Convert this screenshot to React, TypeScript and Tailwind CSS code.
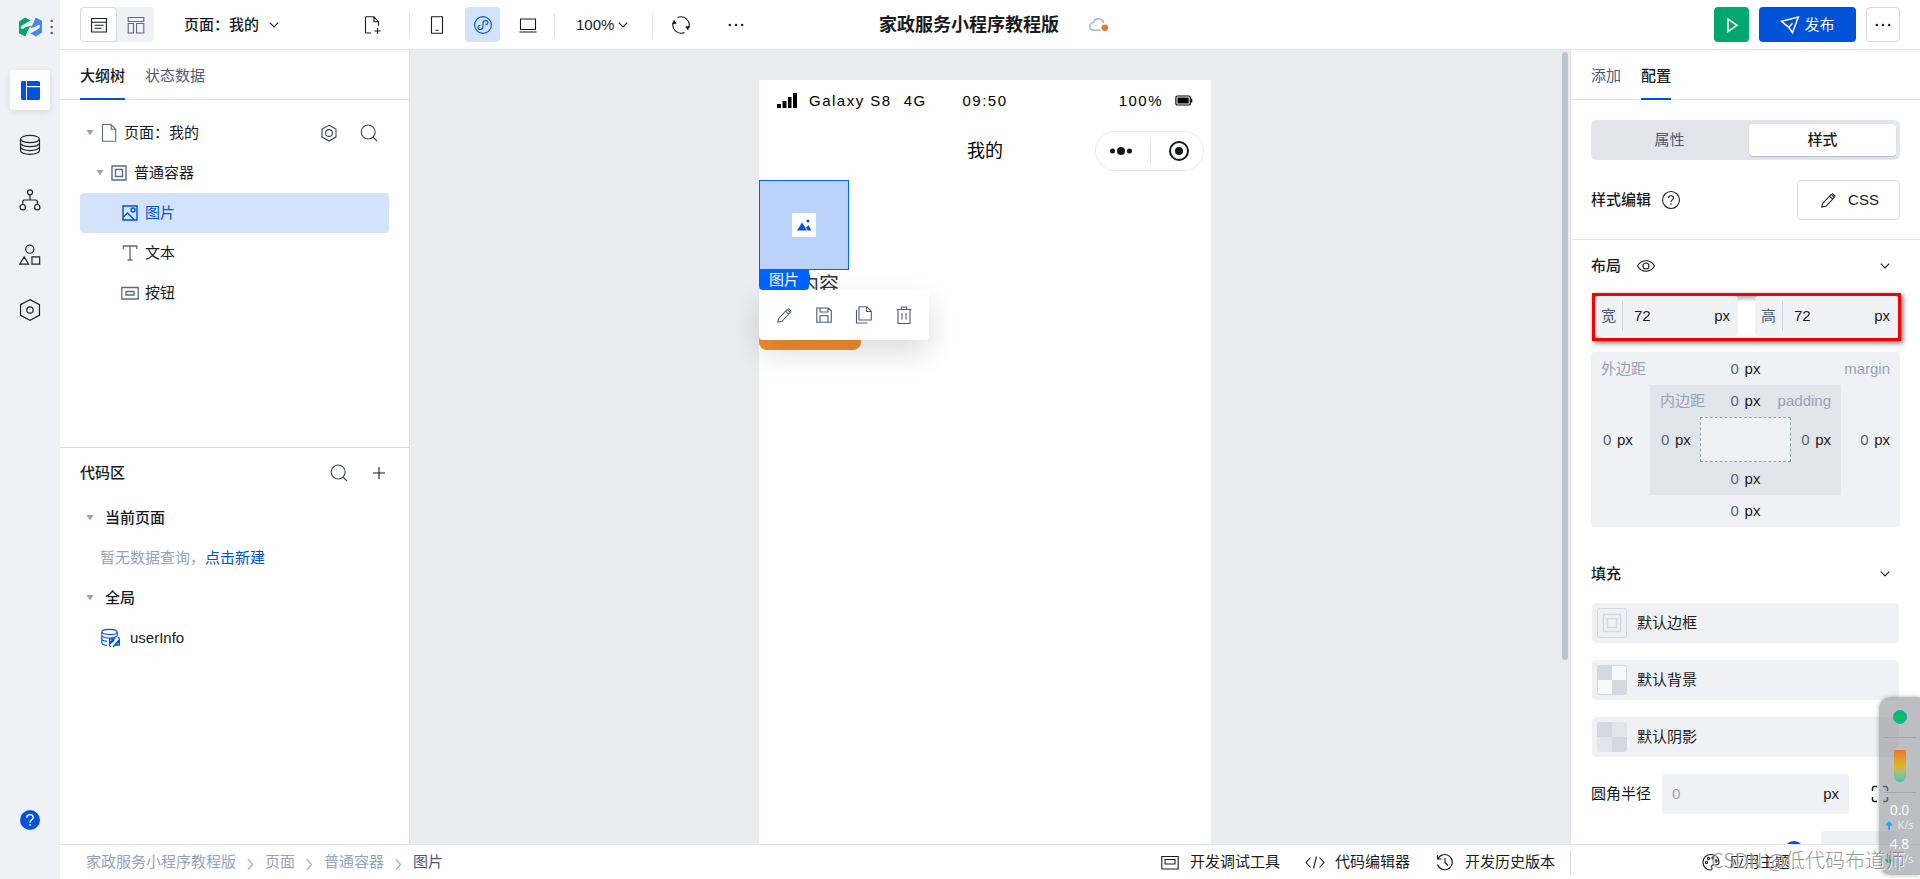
import React from "react";

type IconProps = { className?: string; children: React.ReactNode; size?: number };

function Icon({ className = "", children, size = 20 }: IconProps) {
  return (
    <svg
      width={size}
      height={size}
      viewBox="0 0 20 20"
      fill="none"
      stroke="currentColor"
      strokeWidth="1.1"
      className={"shrink-0 " + className}
      aria-hidden="true"
    >
      {children}
    </svg>
  );
}

const Chevron = () => (
  <Icon size={12}>
    <path d="M3 6l7 7 7-7" strokeWidth="2" />
  </Icon>
);

const Search = () => (
  <Icon className="text-[#3c4558]">
    <circle cx="9.2" cy="9" r="7" />
    <path d="M14 14l4 4" />
  </Icon>
);

const Pencil = () => (
  <Icon>
    <g transform="translate(2.5 2.500) scale(.82)" strokeWidth="1.3">
      <path d="M2.500 13.500L13 2.300l4 3.500L6.600 16.800l-5 .9zM11 4.500l3.900 3.500M14.200 1l4 3.600" />
    </g>
  </Icon>
);

const Hexagon = () => (
  <Icon className="text-[#3c4558]">
    <path d="M10 2.300l7 3.800v8L10 18l-7-3.900v-8z" />
    <circle cx="10" cy="10" r="3.400" />
  </Icon>
);

const Arrow = () => (
  <svg width="8" height="6" viewBox="0 0 8 6" className="shrink-0" aria-hidden="true">
    <path d="M.5 0h7L4 5.600z" fill="#97a3b7" />
  </svg>
);

const Crumb = () => (
  <Icon size={13} className="mt-1 text-[#a9b4c6]">
    <path d="M6 2l7 8-7 8" strokeWidth="2" />
  </Icon>
);

const Dots = () => (
  <svg width="16" height="4" viewBox="0 0 16 4" fill="currentColor" aria-hidden="true">
    <circle cx="1.800" cy="2" r="1.200" />
    <circle cx="8" cy="2" r="1.200" />
    <circle cx="14.200" cy="2" r="1.200" />
  </svg>
);

const Divider = () => <span className="h-6 w-px bg-[#e2e5ea]" />;

function Rail() {
  const item = "flex h-10 w-10 items-center justify-center rounded";
  return (
    <nav className="flex w-[60px] shrink-0 flex-col items-center bg-[#f0f1f5] pb-[49px] text-[#20242c]">
      <div className="flex h-[54px] w-full items-center gap-2 pl-[19px]">
        <svg width="23" height="20" viewBox="0 0 23 20" className="shrink-0" aria-hidden="true">
          <path d="M0 4.500L6 .4l5.500 3.200L4.500 7.600C1.500 9.400 1.200 11.300 2.500 11.800c1.200.4 2.400-.4 4-1.500L12 8.800 9.500 12.300 6.300 19.600 0 16.300z" fill="#00a870" />
          <path d="M23 15.500l-6 4.100-5.500-3.200 7-4c3-1.800 3.300-3.700 2-4.200-1.200-.4-2.400.4-4 1.500L11 11.200l2.500-3.500L16.700.4 23 3.700z" fill="#4787f0" />
        </svg>
        <svg width="4" height="16" viewBox="0 0 4 16" fill="#5b6475" aria-hidden="true">
          <circle cx="1.700" cy="2" r="1.300" />
          <circle cx="1.700" cy="8" r="1.300" />
          <circle cx="1.700" cy="14" r="1.300" />
        </svg>
      </div>
      <div className="flex flex-col gap-[15px] pt-4">
        <button aria-label="页面" className={item + " bg-white shadow-[0_2px_6px_rgba(54,58,80,0.12)]"}>
          <svg width="19" height="19" viewBox="0 0 19 19" fill="#0052d9" aria-hidden="true">
            <path d="M1.500 0H5v19H1.500A1.500 1.500 0 0 1 0 17.500v-16A1.500 1.500 0 0 1 1.500 0zM6 0h11.500A1.500 1.500 0 0 1 19 1.500V5H6zM6 6.200h13v11.300a1.500 1.500 0 0 1-1.500 1.500H6z" />
          </svg>
        </button>
        <button aria-label="数据" className={item}>
          <Icon size={22}>
            <ellipse cx="10" cy="4.600" rx="8.600" ry="3.300" />
            <path d="M1.400 4.600v10.600c0 1.800 3.800 3.300 8.600 3.300s8.600-1.500 8.600-3.300V4.600M1.400 8.200c0 1.800 3.800 3.300 8.600 3.300s8.600-1.500 8.600-3.300M1.400 11.800c0 1.800 3.800 3.300 8.600 3.300s8.600-1.500 8.600-3.300" />
          </Icon>
        </button>
        <button aria-label="流程" className={item}>
          <Icon size={22}>
            <circle cx="10" cy="3" r="2.300" />
            <circle cx="3.400" cy="16.500" r="2.400" />
            <circle cx="16.600" cy="16.500" r="2.400" />
            <path d="M10 5.300V10M3.400 14v-2.500A1.500 1.500 0 0 1 5 10h10a1.500 1.500 0 0 1 1.600 1.500V14" />
          </Icon>
        </button>
        <button aria-label="组件" className={item}>
          <Icon size={22}>
            <circle cx="9.800" cy="4.700" r="3.700" />
            <path d="M4.700 11.700l4 6.500H.8zM11.800 11.700h7v6.500h-7z" />
          </Icon>
        </button>
        <button aria-label="设置" className={item}>
          <Icon size={22}>
            <path d="M10 .6l8.600 4.500v9.800L10 19.400l-8.600-4.500V5.100z" />
            <circle cx="10" cy="10" r="2.900" />
          </Icon>
        </button>
      </div>
      <button aria-label="帮助" className="mt-auto text-[#0052d9]">
        <svg width="20" height="20" viewBox="0 0 20 20" aria-hidden="true">
          <circle cx="10" cy="10" r="10" fill="#0052d9" />
          <path d="M6.800 7.700c0-1.900 1.300-3 3.200-3s3.200 1.100 3.200 2.700c0 1.300-.8 1.900-1.600 2.500-1 .7-1.600 1.300-1.600 2.800" fill="none" stroke="#fff" strokeWidth="1.300" />
          <circle cx="10" cy="15" r=".9" fill="#fff" />
        </svg>
      </button>
    </nav>
  );
}

function Header() {
  return (
    <header className="grid h-[50px] shrink-0 grid-cols-[1fr_auto_1fr] items-center border-b border-[#e2e5ea] px-5 text-[#181b22]">
      <div className="flex items-center">
        <div className="flex h-[35px] rounded bg-[#f0f1f5]">
          <button aria-label="列表" className="flex w-[37px] items-center justify-center rounded border border-[#d3d8e2] bg-white">
            <Icon>
              <path d="M2.600 3.500h14.800v13.500H2.600zM2.600 7.300h14.800M5.600 10.300h9M5.600 13.300h7" />
            </Icon>
          </button>
          <button aria-label="布局" className="flex w-[37px] items-center justify-center text-[#5b6b85]">
            <Icon>
              <path d="M2.200 2.500h15.600v4H2.200zM2.200 8.500h5.300v9.500H2.200zM10.500 8.500h7.300v9.500h-7.300z" />
            </Icon>
          </button>
        </div>
        <button className="ml-[30px] flex items-center gap-[9px] font-medium">
          页面：我的
          <Chevron />
        </button>
        <button aria-label="新建页面" className="mr-[26px] ml-[83px]">
          <Icon>
            <path d="M8 18H3.300a.8.8 0 0 1-.8-.8V2.500a.8.8 0 0 1 .8-.8H11l4.500 5v4M11 1.700v5h4.500M14.500 13v6M11.500 16h6" />
          </Icon>
        </button>
        <Divider />
        <button aria-label="手机" className="ml-[17px] flex w-5 justify-center">
          <Icon>
            <path d="M4.500 1.800h11v16.400h-11zM8.500 15.300h3" />
          </Icon>
        </button>
        <button aria-label="小程序" className="mr-[18px] ml-[18px] flex h-[35px] w-[35px] items-center justify-center rounded bg-[#d4e3fc] text-[#0052d9]">
          <Icon>
            <circle cx="10" cy="10" r="8.400" />
            <path d="M7.500 10.200c-1.600.2-2.500 1.100-2.500 2.200 0 1.200 1.100 2 2.400 2s2.600-.9 2.600-2.300V7.900c0-1.400 1.300-2.300 2.600-2.300s2.400.8 2.400 2c0 1.100-.9 2-2.500 2.200" />
          </Icon>
        </button>
        <button aria-label="电脑" className="mr-4">
          <Icon>
            <path d="M2.500 4h15v10.500h-15zM1.500 17h17" />
          </Icon>
        </button>
        <Divider />
        <button className="mr-[23px] ml-[21px] flex items-center gap-[3px]">
          100%
          <Chevron />
        </button>
        <Divider />
        <button aria-label="刷新" className="ml-[18px]">
          <Icon>
            <path d="M6.500 2.600A8.200 8.200 0 0 1 17.600 13M13.500 17.400A8.200 8.200 0 0 1 2.400 7" />
            <path d="M1.200 9.600L3 4.700l2.800 3.700zM18.800 10.800L17 15.500l-2.800-3.700z" fill="currentColor" stroke="none" />
          </Icon>
        </button>
        <button aria-label="更多" className="ml-[37px]">
          <Dots />
        </button>
      </div>
      <div className="flex items-center gap-[30px] pl-2">
        <h1 className="text-lg font-bold">家政服务小程序教程版</h1>
        <svg width="20" height="16" viewBox="0 0 20 16" fill="none" aria-label="未保存">
          <path d="M11.500 13.300H5a3.900 3.900 0 0 1-.5-7.800A5.200 5.200 0 0 1 14.600 6" stroke="#aab4c5" strokeWidth="1.500" />
          <circle cx="15.800" cy="10.800" r="3.300" fill="#ed7b2f" />
        </svg>
      </div>
      <div className="flex items-center justify-end gap-[10px]">
        <button aria-label="预览" className="flex h-[35px] w-[35px] items-center justify-center rounded bg-[#00a870] text-white">
          <Icon>
            <path d="M6 4l9 6.300-9 6.200z" strokeWidth="1.500" />
          </Icon>
        </button>
        <button className="flex h-[35px] w-[97px] items-center justify-center gap-1 rounded bg-[#0052d9] text-white">
          <Icon>
            <path d="M1.500 6.300L18.300 2l-5.800 15.700-3.700-5.400zM8.800 12.300l3.700-4" strokeWidth="1.500" />
          </Icon>
          发布
        </button>
        <button aria-label="更多操作" className="flex h-[35px] w-[34px] items-center justify-center rounded border border-[#d3d8e2]">
          <Dots />
        </button>
      </div>
    </header>
  );
}

function Tabs({ items, active }: { items: string[]; active: number }) {
  return (
    <div className="flex h-[50px] shrink-0 gap-5 border-b border-[#e2e5ea] px-5">
      {items.map((t, i) => (
        <button
          key={t}
          className={
            i === active
              ? "-mb-px border-b-2 border-[#0052d9] pt-[3px] font-medium text-[#181b22]"
              : "-mb-px border-b-2 border-transparent pt-[3px] text-[#4b5b76]"
          }
        >
          {t}
        </button>
      ))}
    </div>
  );
}

function LeftPanel() {
  const row = "flex h-10 items-center rounded";
  return (
    <aside className="flex w-[350px] shrink-0 flex-col border-r border-[#dcdfe6]">
      <Tabs items={["大纲树", "状态数据"]} active={0} />
      <div className="flex h-[347px] shrink-0 flex-col px-5 pt-[13px]">
        <div className={row + " gap-[5px] pr-[10px] pl-[6px]"}>
          <Arrow />
          <Icon className="text-[#5b6b85]">
            <path d="M3.500 1.500h8.700l4.500 4.700v12H3.500zM12.200 1.500v4.700h4.500" />
          </Icon>
          <span className="flex-1">页面：我的</span>
          <button aria-label="页面设置" className="mr-[15px]">
            <Hexagon />
          </button>
          <button aria-label="搜索">
            <Search />
          </button>
        </div>
        <div className={row + " gap-[5px] pl-4"}>
          <Arrow />
          <Icon className="text-[#5b6b85]">
            <path d="M3 3h14v14H3zM6.500 6.500h7v7h-7z" strokeWidth="1.400" />
          </Icon>
          普通容器
        </div>
        <div className={row + " gap-[5px] bg-[#d4e3fc] pl-10 text-[#0052d9]"}>
          <Icon>
            <path d="M3 3h14v14H3zM3.500 14l4-4 6.500 6.500" strokeWidth="1.400" />
            <circle cx="13" cy="7" r="2" strokeWidth="1.400" />
          </Icon>
          图片
        </div>
        <div className={row + " gap-[5px] pl-10"}>
          <Icon className="text-[#5b6b85]">
            <path d="M3.300 6V3h13.400v3M10 3v14M7.500 17h5" strokeWidth="1.300" />
          </Icon>
          文本
        </div>
        <div className={row + " gap-[5px] pl-10"}>
          <Icon className="text-[#5b6b85]">
            <path d="M1.800 4.500h16.400v11.500H1.800zM6 8.500h8v3.500H6z" strokeWidth="1.300" />
          </Icon>
          按钮
        </div>
      </div>
      <div className="flex flex-1 flex-col border-t border-[#d3d8e2] px-5">
        <div className="flex h-[50px] items-center justify-between">
          <h2 className="font-medium">代码区</h2>
          <div className="flex gap-5">
            <button aria-label="搜索代码">
              <Search />
            </button>
            <button aria-label="新增">
              <Icon>
                <path d="M10 4v12M4 10h12" />
              </Icon>
            </button>
          </div>
        </div>
        <div className={row + " gap-[11px] pl-[6px] font-medium"}>
          <Arrow />
          当前页面
        </div>
        <div className={row + " pl-5 text-[#97a3b7]"}>
          暂无数据查询，
          <a href="#new" className="text-[#0052d9]">
            点击新建
          </a>
        </div>
        <div className={row + " gap-[11px] pl-[6px] font-medium"}>
          <Arrow />
          全局
        </div>
        <div className={row + " gap-[10px] pl-5"}>
          <Icon className="text-[#0052d9]">
            <ellipse cx="9.500" cy="4" rx="7.700" ry="2.600" />
            <path d="M1.800 4v10.800c0 1.400 2.400 2.400 5.200 2.700M17.200 4v4.500M1.800 11.500c.8 1.200 3 1.700 5.200 1.900M1.800 7.800c1 2.500 11.500 3.200 15.400.4" />
            <path d="M9.500 14.500V11h4.700zM10.500 19l-1.300-2.500 5-4.200M19.500 13.500V17h-4.700zM18.500 9l1 2.500-5.500 6.500-.8 1" strokeWidth="1.300" />
          </Icon>
          userInfo
        </div>
      </div>
    </aside>
  );
}

function Canvas() {
  return (
    <main className="relative flex min-w-0 flex-1 justify-center bg-[#ebecf0] pt-[30px] pr-[10px]">
      <div className="w-[452px] bg-white">
        <div className="grid h-[41px] grid-cols-3 items-center px-[18px] tracking-widest text-black">
          <div className="flex items-center gap-3 whitespace-nowrap">
            <svg width="20" height="15" viewBox="0 0 20 15" className="shrink-0" aria-hidden="true">
              <path d="M0 11h4v4H0zM5.500 8h4v7h-4zM11 4h3.500v11H11zM16 0h4v15h-4z" />
            </svg>
            <span>Galaxy S8</span>
            <span>4G</span>
          </div>
          <span className="text-center">09:50</span>
          <div className="flex items-center justify-end gap-3">
            100%
            <svg width="18" height="11" viewBox="0 0 20 12" aria-hidden="true">
              <rect x="1" y="1" width="16" height="10" rx="1.500" fill="none" stroke="#000" strokeWidth="1.300" />
              <path d="M2.800 2.800h12.400v6.400H2.800zM17.500 3.800h1.700v4.400h-1.700z" />
            </svg>
          </div>
        </div>
        <div className="grid h-[59px] grid-cols-3 items-start px-[7px] pt-[10px] text-black">
          <span className="col-start-2 text-center text-lg leading-10">我的</span>
          <div className="flex h-10 w-[109px] items-center justify-around justify-self-end rounded-full border border-[#e8eaee] px-[5px] text-[#16181d]">
            <button aria-label="菜单">
              <svg width="24" height="10" viewBox="0 0 24 10" fill="currentColor" aria-hidden="true">
                <circle cx="3.500" cy="5" r="2.500" />
                <circle cx="12" cy="5" r="4" />
                <circle cx="20.500" cy="5" r="2.500" />
              </svg>
            </button>
            <Divider />
            <button aria-label="关闭">
              <svg width="22" height="22" viewBox="0 0 22 22" fill="currentColor" aria-hidden="true">
                <circle cx="11" cy="11" r="9" fill="none" stroke="currentColor" strokeWidth="2" />
                <circle cx="11" cy="11" r="4" />
              </svg>
            </button>
          </div>
        </div>
        <div className="relative">
          <div className="flex h-[90px] w-[90px] items-center justify-center border border-[#0063ff] bg-[#bad1fa]">
            <svg width="24" height="24" viewBox="0 0 24 24" aria-hidden="true">
              <rect width="24" height="24" rx="1" fill="#fff" />
              <path d="M5 17.500L10 9.500l3.500 5.200L15 17.500zM14 14.500l2.500-2.500 2.700 5.500h-3.500z" fill="#0052d9" />
              <circle cx="16" cy="8" r="1.500" fill="#0052d9" />
            </svg>
          </div>
          <p className="text-xl leading-[30px] text-[#333]">文本内容</p>
          <div className="h-[50px] w-[102px] rounded-lg bg-[#f2902f]" />
          <span className="absolute top-[90px] left-0 h-5 w-[50px] rounded-b bg-[#0063ff] text-center leading-5 text-white">图片</span>
          <div className="absolute top-[110px] left-0 flex h-[50px] w-[170px] items-center justify-around rounded bg-white px-[5px] text-[#4b5b76] shadow-[0_12px_30px_rgba(0,0,0,0.14)]">
            <button aria-label="编辑">
              <Pencil />
            </button>
            <button aria-label="保存">
              <Icon>
                <path d="M2.800 3h11.500l3 3v11.300H2.800zM6 3v4h8V3M6 17.300v-6.500h8v6.500" />
              </Icon>
            </button>
            <button aria-label="复制">
              <Icon>
                <path d="M5 1.800h7.800l4.500 4.500V15H5zM12.500 1.800v4.700h4.800M2.500 5v13h11" />
              </Icon>
            </button>
            <button aria-label="删除">
              <Icon>
                <path d="M2.500 4.500h15M4 4.500v14h12v-14M7.300 4.300V2h5.400v2.300M8 8v6.500M12 8v6.500" />
              </Icon>
            </button>
          </div>
        </div>
      </div>
      <div className="absolute top-[2px] right-[2px] h-[608px] w-[6px] rounded-full bg-[#bcc4d0]" />
    </main>
  );
}

function Px({ name, className = "" }: { name: string; className?: string }) {
  return (
    <label className={"flex items-center gap-[5px] " + className}>
      <input aria-label={name} defaultValue="0" className="w-[9px] text-[#5b6475] outline-none" />
      px
    </label>
  );
}

function SizeField({ label }: { label: string }) {
  return (
    <label className="flex h-10 w-[143px] items-center rounded bg-[#f0f1f5] pr-2">
      <span className="px-[6px] text-[#4b5b76]">{label}</span>
      <span className="h-[30px] w-px bg-[#d3d8e2]" />
      <input defaultValue="72" className="min-w-0 flex-1 px-[11px] outline-none" />
      px
    </label>
  );
}

function FillRow({ label, children }: { label: string; children: React.ReactNode }) {
  return (
    <button className="mx-px flex h-10 shrink-0 items-center gap-[10px] rounded bg-[#f0f1f5] px-[5px]">
      <svg width="30" height="30" viewBox="0 0 30 30" aria-hidden="true">
        {children}
      </svg>
      {label}
    </button>
  );
}

function RightPanel() {
  return (
    <aside className="flex w-[350px] shrink-0 flex-col overflow-hidden border-l border-[#e2e5ea]">
      <Tabs items={["添加", "配置"]} active={1} />
      <div className="flex shrink-0 flex-col gap-5 border-b border-[#e2e5ea] px-5 pt-5 pb-[19px]">
        <div className="flex h-10 rounded-md bg-[#e2e5ea] p-1">
          <button className="flex-1 pr-[5px] text-[#4b5b76]">属性</button>
          <button className="w-[147px] rounded bg-white font-medium shadow-[0_1px_1px_#b4bcc9]">样式</button>
        </div>
        <div className="flex h-10 items-center justify-between">
          <div className="flex items-center gap-[10px]">
            <h2 className="font-medium">样式编辑</h2>
            <Icon>
              <circle cx="10" cy="10" r="8.500" />
              <path d="M7.500 8c0-1.500 1-2.300 2.500-2.300s2.500.9 2.500 2.200c0 1-.6 1.500-1.300 2-.8.500-1.200 1-1.200 2.100M10 13.200v1.600" />
            </Icon>
          </div>
          <button className="flex h-10 w-[103px] items-center justify-center gap-[10px] rounded border border-[#d3d8e2]">
            <Pencil />
            CSS
          </button>
        </div>
      </div>
      <div className="flex flex-col px-5">
        <div className="mb-px flex h-[52px] shrink-0 items-center justify-between pr-[9px]">
          <div className="flex items-center gap-[15px]">
            <h2 className="font-medium">布局</h2>
            <Icon>
              <path d="M1.500 10C3.500 6.500 6.500 4.800 10 4.800s6.500 1.700 8.500 5.200c-2 3.500-5 5.200-8.500 5.200S3.500 13.500 1.500 10z" />
              <circle cx="10" cy="10" r="3" />
            </Icon>
          </div>
          <Chevron />
        </div>
        <div className="-mr-px ml-px flex h-12 shrink-0 justify-between border-3 border-[#f80000] shadow-[2px_2px_5px_rgba(0,0,0,0.55),inset_2px_2px_5px_rgba(0,0,0,0.4)]">
          <SizeField label="宽" />
          <SizeField label="高" />
        </div>
        <div className="mt-[11px] grid shrink-0 grid-cols-[59px_1fr_59px] grid-rows-[33px_110px_32px] items-center rounded bg-[#f0f1f5]">
          <div className="col-span-3 grid grid-cols-[1fr_auto_1fr] items-center px-[10px]">
            <span className="text-[#97a3b7]">外边距</span>
            <Px name="上外边距" />
            <span className="text-right text-[#97a3b7]">margin</span>
          </div>
          <Px name="左外边距" className="pl-3" />
          <div className="grid h-full grid-cols-[50px_1fr_50px] grid-rows-[32px_45px_33px] items-center bg-[#e2e5ea]">
            <div className="col-span-3 grid grid-cols-[1fr_auto_1fr] items-center px-[10px]">
              <span className="text-[#97a3b7]">内边距</span>
              <Px name="上内边距" />
              <span className="text-right text-[#97a3b7]">padding</span>
            </div>
            <Px name="左内边距" className="pl-[11px]" />
            <div className="h-full border border-dashed border-[#97a3b7] bg-[#f0f1f5]" />
            <Px name="右内边距" className="justify-end pr-[10px]" />
            <Px name="下内边距" className="col-span-3 justify-center" />
          </div>
          <Px name="右外边距" className="justify-end pr-[10px]" />
          <Px name="下外边距" className="col-span-3 justify-center" />
        </div>
        <div className="mt-[18px] flex h-[58px] shrink-0 items-center justify-between pr-[9px]">
          <h2 className="font-medium">填充</h2>
          <Chevron />
        </div>
        <div className="flex flex-col gap-[17px]">
          <FillRow label="默认边框">
            <g fill="none" stroke="#d3d9e3">
              <rect x=".5" y=".5" width="29" height="29" rx="2" />
              <rect x="6.500" y="6.500" width="17" height="17" strokeWidth="1.500" />
              <rect x="10.500" y="10.500" width="9" height="9" strokeWidth="1.500" />
            </g>
          </FillRow>
          <FillRow label="默认背景">
            <rect x=".5" y=".5" width="29" height="29" rx="2" fill="#f8f9fb" stroke="#d3d9e3" />
            <path d="M1 1h14v14H1zM15 15h14v14H15z" fill="#d3d9e3" />
          </FillRow>
          <FillRow label="默认阴影">
            <rect width="30" height="30" rx="3" fill="#e2e5ea" />
            <path d="M3 0h12v15H0V3a3 3 0 0 1 3-3zM15 15h15v12a3 3 0 0 1-3 3H15z" fill="#d3d9e3" />
          </FillRow>
          <div className="flex h-10 shrink-0 items-center">
            <label htmlFor="radius">圆角半径</label>
            <div className="ml-[11px] flex h-10 w-[187px] items-center rounded bg-[#f0f1f5] px-[10px]">
              <input id="radius" placeholder="0" className="min-w-0 flex-1 outline-none placeholder:text-[#97a3b7]" />
              px
            </div>
            <button aria-label="分别设置" className="ml-[21px]">
              <Icon>
                <path d="M2.500 7V4.500a2 2 0 0 1 2-2H7M13 2.500h2.500a2 2 0 0 1 2 2V7M17.500 13v2.500a2 2 0 0 1-2 2H13M7 17.500H4.500a2 2 0 0 1-2-2V13" strokeWidth="1.500" />
              </Icon>
            </button>
          </div>
          <div className="mx-px flex h-10 shrink-0 items-center justify-end gap-[17px]">
            <span className="h-5 w-5 rounded-full bg-[#0052d9]" />
            <span className="h-10 w-[78px] rounded bg-[#f0f1f5]" />
          </div>
        </div>
      </div>
    </aside>
  );
}

function Footer() {
  return (
    <footer className="flex h-[35px] shrink-0 items-center border-t border-[#e2e5ea] text-[#181b22]">
      <nav className="flex flex-1 items-center gap-2 pl-[26px] text-[#97a3b7]">
        <a href="#app">家政服务小程序教程版</a>
        <Crumb />
        <a href="#page">页面</a>
        <Crumb />
        <a href="#container">普通容器</a>
        <Crumb />
        <a href="#image" className="text-[#4b5b76]">图片</a>
      </nav>
      <div className="flex items-center gap-[25px] pr-[15px]">
        <button className="flex items-center gap-[10px]">
          <Icon>
            <path d="M1.800 4.500h16.400v12.500H1.800zM5 7.500h10v4.500H5z" />
          </Icon>
          开发调试工具
        </button>
        <button className="flex items-center gap-[10px]">
          <Icon>
            <path d="M5.500 5.500L1 10.500l4.500 5M14.500 5.500l4.500 5-4.500 5M11.500 4.500l-3 12" />
          </Icon>
          代码编辑器
        </button>
        <button className="flex items-center gap-[10px]">
          <Icon>
            <path d="M2.500 3v4h4M2.800 7a7.600 7.600 0 1 1-.3 5.500M10 6v4.500l3 3" />
          </Icon>
          开发历史版本
        </button>
      </div>
      <div className="flex h-[25px] w-[350px] items-center justify-center border-l border-[#d3d8e2]">
        <button className="flex items-center gap-2">
          <Icon>
            <path d="M10 2.500c-4.500 0-8 3.300-8 7.700 0 4.500 3.500 7.800 7.300 7.800 2 0 2-1.500 1.500-2.500-.6-1.500.2-2.700 1.700-2.700h2.700c2 0 2.800-1.200 2.800-2.800 0-4.200-3.500-7.500-8-7.500z" />
            <circle cx="5.500" cy="10.500" r="1.100" />
            <circle cx="7.500" cy="6.500" r="1.100" />
            <circle cx="12" cy="6" r="1.100" />
            <circle cx="15" cy="9" r="1.100" />
          </Icon>
          应用主题
        </button>
      </div>
    </footer>
  );
}

function Speed({ value, up }: { value: string; up: boolean }) {
  return (
    <div className="text-center text-white">
      <div className="font-['Open_Sans'] text-sm leading-[18px]">{value}</div>
      <div className="flex items-center justify-center gap-1 font-['Open_Sans'] text-[11px] leading-3 text-white/70">
        <svg width="8" height="9" viewBox="0 0 8 9" aria-hidden="true">
          {up ? (
            <path d="M4 0l4 4.500H5V9H3V4.500H0z" fill="#18a8ff" />
          ) : (
            <path d="M4 9L0 4.500h3V0h2v4.500h3z" fill="#00a860" />
          )}
        </svg>
        K/s
      </div>
    </div>
  );
}

function Overlays() {
  return (
    <>
      <div className="absolute right-0 bottom-1 flex h-[178px] w-[41px] flex-col items-center rounded-l-xl bg-[#8f9299]/60 pt-[13px] shadow-[0_0_4px_rgba(0,0,0,0.3)]">
        <span className="h-[14px] w-[14px] rounded-full border border-[#3a8fd0] bg-[#00c264]" />
        <span className="mt-[13px] h-px w-8 bg-[#a4a8ae]" />
        <span className="mt-[7px] h-[37px] w-3 overflow-hidden rounded-full bg-[#bfc0c6] pt-[5px]">
          <span className="block h-full bg-linear-to-b from-[#ed7430] via-[#d5b81e] to-[#35bfc0]" />
        </span>
        <span className="mt-[10px] mb-2 h-px w-8 bg-[#a4a8ae]" />
        <div className="flex flex-col gap-1">
          <Speed value="0.0" up />
          <Speed value="4.8" up={false} />
        </div>
      </div>
      <div className="pointer-events-none absolute right-[15px] bottom-1 font-['Noto_Sans_CJK_SC'] text-xl leading-[30px] font-light text-[#77797d]/80 [text-shadow:1px_1px_1px_#fff]">
        CSDN @低代码布道师
      </div>
    </>
  );
}

export default function App() {
  return (
    <div className="relative flex h-screen overflow-hidden bg-white font-['Liberation_Sans','Noto_Sans_CJK_SC',sans-serif] text-[15px] leading-5 text-[#181b22]">
      <Rail />
      <div className="flex min-w-0 flex-1 flex-col">
        <Header />
        <div className="flex min-h-0 flex-1">
          <LeftPanel />
          <Canvas />
          <RightPanel />
        </div>
        <Footer />
      </div>
      <Overlays />
    </div>
  );
}
